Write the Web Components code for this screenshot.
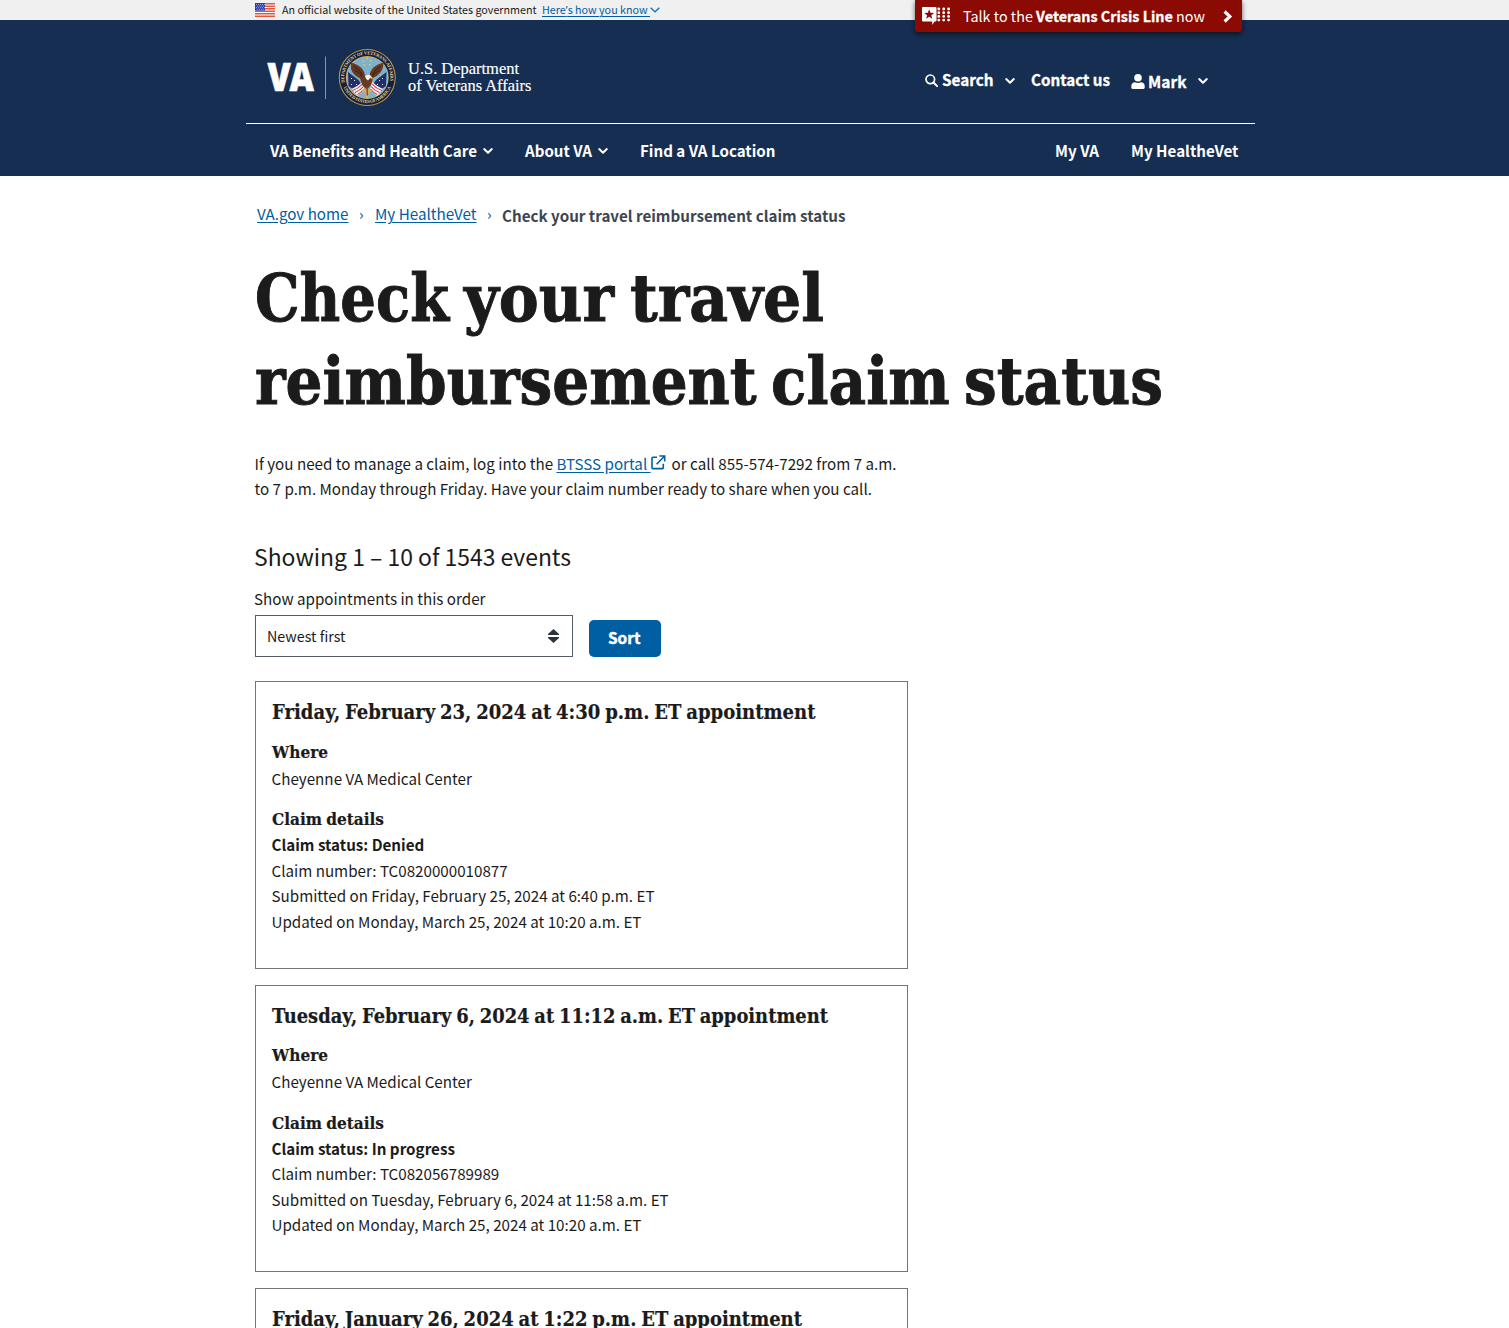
<!DOCTYPE html>
<html lang="en">
<head>
<meta charset="utf-8">
<title>Check your travel reimbursement claim status</title>
<style>
html,body{margin:0;padding:0}
body{background:#fff;color:#1b1b1b;font-family:"Noto Sans CJK SC","Source Sans Pro",sans-serif;font-size:15.18px;line-height:25.45px;height:1328px;overflow:hidden}
</style>
</head>
<body>
<va-page></va-page>
<script>
const SLAB = '"DejaVu Serif","DejaVu Serif Condensed",serif';

/* Single line of text set to a given measure. */
class FitText extends HTMLElement {
  connectedCallback() {
    if (!this.shadowRoot) {
      this.attachShadow({mode:'open'}).innerHTML = `
        <style>:host{display:inline-block;white-space:nowrap;vertical-align:baseline;text-decoration:inherit}
        span{display:inline-block;transform-origin:0 50%;text-decoration:inherit}</style><span><slot></slot></span>`;
    }
    const target = parseFloat(this.getAttribute('measure'));
    const span = this.shadowRoot.querySelector('span');
    span.style.transform = 'none';
    const natural = span.getBoundingClientRect().width;
    if (target && natural) {
      this.style.width = target + 'px';
      span.style.transform = `scaleX(${target / natural})`;
    }
  }
}
customElements.define('fit-text', FitText);

const ICONS = {
  chevron: ['0 0 10 6', '<path d="M1.2 1.1 5 4.700 8.800 1.100" fill="none" stroke="currentColor" stroke-width="2.100" stroke-linecap="round" stroke-linejoin="round"/>'],
  thin: ['0 0 10 6', '<path d="M.7 .8 5 4.9 9.3 .8" fill="none" stroke="currentColor" stroke-width="1.4"/>'],
  right: ['0 0 9 13', '<path d="M1.6 1.5 6.9 6.5 1.6 11.5" fill="none" stroke="currentColor" stroke-width="3.100"/>'],
  search: ['0 0 13 13', '<circle cx="5.3" cy="5.3" r="4.3" fill="none" stroke="currentColor" stroke-width="1.7"/><path d="m8.5 8.5 3.6 3.6" stroke="currentColor" stroke-width="2" stroke-linecap="round"/>'],
  user: ['0 0 14 15', '<circle cx="7" cy="3.8" r="3.8" fill="currentColor"/><path d="M.3 13.6V12c0-2.2 1.6-3.7 3.8-3.7.7.4 1.800.6 2.900.6s2.200-.2 2.900-.6c2.200 0 3.800 1.500 3.800 3.700v1.600c0 .8-.5 1.300-1.300 1.300H1.600c-.8 0-1.300-.5-1.300-1.300z" fill="currentColor"/>'],
  external: ['0 0 15 15', '<path d="M6 2.300H1.900a.9.900 0 0 0-.9.900v9.500c0 .5.4.9.900.9h9.500c.5 0 .9-.4.900-.9V8.800M8.300 1h5.400v5.400M13.200 1.500 5.600 9.200" fill="none" stroke="currentColor" stroke-width="1.6"/>'],
  sort: ['0 0 11 14', '<path d="M5.500 0 11 5.100V6H0V5.100zM5.500 14 11 8.900V8H0v.9z" fill="#2b333d"/>'],
  flag: ['0 0 20 14', '<path fill="#fff" d="M0 0h20v14H0z"/><path d="M0 .7h20M0 3.200h20M0 5.700h20M0 8.200h20M0 10.700h20M0 13.200h20" stroke="#e2563f" stroke-width="1.400"/><path fill="#2c3fb0" d="M0 0h10v7.600H0z"/><path d="M1 1.500h9M1.900 3.100h8M1 4.700h9M1.900 6.300h8" stroke="#c3cbf5" stroke-width=".8" stroke-dasharray=".9 1.100"/>'],
  crisis: ['0 0 29 18', '<path fill="#fff" d="M1 0h12.500q1 0 1 1v12.500q0 1-1 1H12.500L10.200 18V14.500H1q-1 0-1-1V1Q0 0 1 0z"/><path fill="#8b0a03" d="m7.200 2.300 1.300 3.400 3.600.2-2.800 2.300 1 3.500-3.100-2-3.100 2 1-3.500-2.800-2.300 3.600-.2z"/><path d="M16.800 2h10M16.800 5.800h10M16.800 9.400h10M16.800 13.100h10" stroke="#fff" stroke-width="2.900" stroke-linecap="round" stroke-dasharray="0 4.900"/>']
};
class VaIcon extends HTMLElement {
  connectedCallback() {
    const [box, art] = ICONS[this.getAttribute('name')];
    const [, , w, h] = box.split(' ');
    if (!this.shadowRoot) this.attachShadow({mode:'open'});
    this.shadowRoot.innerHTML = `<style>:host{display:inline-block;flex:none;line-height:0}svg{display:block;overflow:visible}</style>
      <svg width="${w}" height="${h}" viewBox="${box}" aria-hidden="true">${art}</svg>`;
  }
}
customElements.define('va-icon', VaIcon);

class GovBanner extends HTMLElement {
  connectedCallback() {
    this.attachShadow({mode:'open'}).innerHTML = `
    <style>
      :host{display:block;background:#f0f0f0;height:20px}
      .in{width:1000px;height:20px;margin:0 auto;display:flex;align-items:center;font-size:10.75px;line-height:20px}
      a{color:#005ea2;text-decoration:underline;text-underline-offset:1.500px;margin-left:5.500px}
      .txt{margin-left:7px}
      .c{color:#0071bc}
      i{font-style:normal;font-family:"Noto Sans",sans-serif}
    </style>
    <div class="in"><va-icon name="flag"></va-icon><span class="txt"><fit-text measure="254.500">An official website of the United States government</fit-text></span>
      <a><fit-text measure="108">Here<i>’</i>s how you know&nbsp;</fit-text></a><va-icon class="c" name="thin"></va-icon></div>`;
  }
}
customElements.define('gov-banner', GovBanner);

class CrisisLine extends HTMLElement {
  connectedCallback() {
    this.attachShadow({mode:'open'}).innerHTML = `
    <style>
      :host{display:flex;align-items:center;box-sizing:border-box;width:327px;height:32px;padding:0 10px 0 7px;background:#8b0a03;color:#fff;border-radius:0 0 3px 3px;box-shadow:0 2px 5px rgba(0,0,0,.6);font-size:14.500px;font-weight:400;line-height:32px}
      .t{margin-left:12px;flex:1}
      b{font-weight:700;-webkit-text-stroke:.3px #fff}
    </style>
    <va-icon name="crisis"></va-icon><span class="t"><fit-text measure="242">Talk to the <b>Veterans Crisis Line</b> now</fit-text></span><va-icon name="right"></va-icon>`;
  }
}
customElements.define('crisis-line', CrisisLine);

class VaLogo extends HTMLElement {
  connectedCallback() {
    const stars = [[28.500,7.500],[24.800,10],[32.200,10],[25.800,14],[31.200,14]].map(([x,y])=>`<circle cx="${x}" cy="${y+2}" r=".9" fill="#e9c63f"/>`).join('');
    this.attachShadow({mode:'open'}).innerHTML = `
    <style>:host{display:block}svg{display:block;overflow:visible}</style>
    <svg width="266" height="58" viewBox="0 0 266 58">
      <text transform="translate(1.500 41.800) scale(.85 1)" fill="#fff" stroke="#fff" stroke-width=".6" font-family="Open Sans" font-weight="800" font-size="39.500" x="0 25.800" y="0">VA</text>
      <path d="M59.500 7.500V50" stroke="#8b97a8" stroke-width="1"/>
      <g transform="translate(72.500 0)">
        <circle cx="28.750" cy="28.500" r="28.500" fill="#c79a45"/>
        <circle cx="28.750" cy="28.500" r="27.500" fill="#14203f"/>
        <circle cx="28.750" cy="28.500" r="21.400" fill="#d8b362"/>
        <circle cx="28.750" cy="28.500" r="20.700" fill="#7db2cf"/>
        <path id="top" d="M6.200 33.500A23.100 23.100 0 1 1 51.300 33.500" fill="none"/>
        <path id="bot" d="M3.800 34.500A25.700 25.700 0 0 0 53.700 34.500" fill="none"/>
        <g fill="#e6cf8d" font-family="Liberation Serif" font-weight="700" font-size="4.600">
          <text><textPath href="#top" textLength="81">DEPARTMENT OF VETERANS AFFAIRS</textPath></text>
          <text><textPath href="#bot" startOffset="4" textLength="60">UNITED STATES OF AMERICA</textPath></text>
        </g>
        ${stars}
        <path d="M9.500 23 20 31 24 37 17 42 10 37zM48 23 37.500 31 33.500 37 40.500 42 47.500 37z" fill="#232f68"/>
        <path d="M13 29v1m3 1v1m-3 3v1m5-1v1M44 29v1m-3 1v1m3 3v1m-5-1v1" stroke="#dfe5f5" stroke-width="1"/>
        <path d="M13 40q5-2 11-7l2 8-7 6zM44.500 40q-5-2-11-7l-2 8 7 6z" fill="#f3eeee"/>
        <path d="M14 41.500q6-2 10-6.500M16.500 43.500q5-2 8.500-6M19 45.500q4-2 6.500-5.500M43.500 41.500q-6-2-10-6.500M41 43.500q-5-2-8.500-6M38.500 45.500q-4-2-6.500-5.500" fill="none" stroke="#c23743" stroke-width="1.100"/>
        <path d="M12.500 13.500Q19 15 23 19q3 3 3.500 8l2.200 2 2.300-2q.5-5 3.500-8 4-4 10.500-5.500 0 6-3 10-3 3.500-7.500 5.500l-2 7-4 4.500-4.500-4-2.500-7q-4.500-2-7-5.500-2.500-4-2-5z" fill="#6a3a20"/>
        <path d="M15 17q6 3 9 9M16 21q5 2 8 7M42.500 17q-6 3-9 9M41.500 21q-5 2-8 7" fill="none" stroke="#3a1c12" stroke-width=".9"/>
        <path d="M26.500 27.500q3-3 5.500-1l2.500 3-3-.5-2 2.500q-2-1-3-4z" fill="#f7f2e5"/>
        <path d="m31.500 27.500 3.200 2.200-2.700-.1z" fill="#e8b92e"/>
        <path d="m23 42 3-3 1 5zM34 42l-3-3-1 5zM26.500 41h4l-1 8h-2z" fill="#d9b04c"/>
        <path d="M28 38.500h1.500v8H28z" fill="#c23743"/>
      </g>
      <g fill="#fff" font-family="Liberation Serif" font-size="17" font-weight="400" stroke="#fff" stroke-width=".15">
        <text x="142" y="25.300" textLength="111" lengthAdjust="spacingAndGlyphs">U.S. Department</text>
        <text x="142" y="42" textLength="123.500" lengthAdjust="spacingAndGlyphs">of Veterans Affairs</text>
      </g>
    </svg>`;
  }
}
customElements.define('va-logo', VaLogo);

class VaHeader extends HTMLElement {
  connectedCallback() {
    this.attachShadow({mode:'open'}).innerHTML = `
    <style>
      :host{display:block;background:#162e51;color:#fff;height:156px;position:relative;font-weight:700}
      crisis-line{position:absolute;left:915px;top:-20px}
      .in{width:1009px;margin:0 auto 0 246px}
      .top{height:103px;box-sizing:border-box;display:flex;padding:0 47px 0 20px}
      va-logo{margin-top:29px}
      .menu{margin-left:auto;height:26px;margin-top:47px;display:flex;align-items:center;-webkit-text-stroke:.3px #fff}
      .menu .d{margin-top:3px}
      .contact{margin:0 21px 0 16px}
      nav{border-top:1px solid #fff;height:53px;display:flex;align-items:center;padding:1px 17px 0 24px;box-sizing:border-box}
      nav va-icon{margin:0 32px 0 6px}
      .push{margin-left:auto;margin-right:32px}
    </style>
    <crisis-line></crisis-line>
    <div class="in">
      <div class="top"><va-logo></va-logo>
        <div class="menu"><va-icon name="search"></va-icon><fit-text measure="51.500" style="margin-left:4px">Search</fit-text><va-icon name="chevron" style="margin:2px 0 0 11.500px"></va-icon>
          <fit-text class="contact" measure="79">Contact us</fit-text>
          <va-icon name="user" style="margin:3px 3px 0 0"></va-icon><fit-text class="d" measure="38.500">Mark</fit-text><va-icon name="chevron" style="margin:2px 0 0 11.500px"></va-icon></div>
      </div>
      <nav><fit-text measure="207">VA Benefits and Health Care</fit-text><va-icon name="chevron"></va-icon>
        <fit-text measure="67">About VA</fit-text><va-icon name="chevron"></va-icon>
        <fit-text measure="135.500">Find a VA Location</fit-text>
        <fit-text class="push" measure="44">My VA</fit-text><fit-text measure="107.500">My HealtheVet</fit-text></nav>
    </div>`;
  }
}
customElements.define('va-header', VaHeader);

class VaCrumbs extends HTMLElement {
  connectedCallback() {
    this.attachShadow({mode:'open'}).innerHTML = `
    <style>
      :host{display:flex;align-items:center;height:26px;padding-left:2px;color:#005ea2}
      a{text-decoration:underline;text-underline-offset:1.500px}
      i{font-style:normal;width:26.500px;text-align:center}
      b{color:#3d4551;margin:4px 0 0 -.5px}
    </style>
    <a><fit-text measure="91.500">VA.gov home</fit-text></a><i>›</i><a><fit-text measure="101.500">My HealtheVet</fit-text></a><i>›</i><b><fit-text measure="343.500">Check your travel reimbursement claim status</fit-text></b>`;
  }
}
customElements.define('va-crumbs', VaCrumbs);

class SortForm extends HTMLElement {
  connectedCallback() {
    this.attachShadow({mode:'open'}).innerHTML = `
    <style>
      :host{display:block}
      .label{margin-left:-.5px}
      .row{display:flex;align-items:flex-end;gap:16px;margin-top:4px}
      .sel{box-sizing:border-box;width:318px;height:42px;border:1px solid #565c65;display:flex;align-items:center;justify-content:space-between;padding:0 12.500px 2px 11.500px;font-size:14.300px}
      .sel va-icon{margin-top:2px}
      button{all:unset;box-sizing:border-box;width:72px;height:37px;padding-bottom:2px;border-radius:5px;background:#005ea2;color:#fff;font-weight:700;display:flex;align-items:center;justify-content:center;-webkit-text-stroke:.4px #fff}
    </style>
    <div class="label"><fit-text measure="231.500">Show appointments in this order</fit-text></div>
    <div class="row"><div class="sel"><fit-text measure="78.500">Newest first</fit-text><va-icon name="sort"></va-icon></div><button><fit-text measure="32.500">Sort</fit-text></button></div>`;
  }
}
customElements.define('sort-form', SortForm);

class ClaimCard extends HTMLElement {
  connectedCallback() {
    const a = n => this.getAttribute(n);
    this.attachShadow({mode:'open'}).innerHTML = `
    <style>
      :host{display:block;box-sizing:border-box;width:653px;height:287.500px;border:1px solid #71767a;padding:16.300px 16px 0;margin-bottom:16px}
      h2,h3,p{margin:0}
      h2,h3{font-family:${SLAB};font-weight:700;word-spacing:-.08em;-webkit-text-stroke:.2px #1b1b1b}
      h2{font-size:19.500px;line-height:30px;margin-bottom:11.200px}
      h3{font-size:16.500px;line-height:26px}
      p + h3{margin:16.400px 0 -.9px}
    </style>
    <h2><fit-text measure="${a('measure')}">${a('when')} appointment</fit-text></h2>
    <h3><fit-text measure="56">Where</fit-text></h3>
    <p>Cheyenne VA Medical Center</p>
    <h3><fit-text measure="112">Claim details</fit-text></h3>
    <p><b>Claim status: ${a('status')}</b></p>
    <p>Claim number: ${a('number')}</p>
    <p>Submitted on ${a('submitted')}</p>
    <p>Updated on Monday, March 25, 2024 at 10:20 a.m. ET</p>`;
  }
}
customElements.define('claim-card', ClaimCard);

class VaPage extends HTMLElement {
  connectedCallback() {
    this.attachShadow({mode:'open'}).innerHTML = `
    <style>
      :host{display:block}
      main{width:1000px;margin:0 auto;padding-top:25px}
      h1{font:700 66px/82.700px ${SLAB};margin:30px 0 0;-webkit-text-stroke:1px #1b1b1b;word-spacing:-.1em}
      .ln{display:flex;gap:15.500px}
      .intro{margin:28.600px 0 0;white-space:nowrap}
      .intro a{color:#005ea2;text-decoration:underline;text-underline-offset:1.500px}
      .intro va-icon{color:#005ea2;margin:0 6px 0 0;vertical-align:0}
      .count{font-size:22.800px;line-height:34px;margin:37.600px 0 0 -.5px}
      sort-form{margin-top:12.400px}
      .list{margin-top:23.700px}
    </style>
    <gov-banner></gov-banner>
    <va-header></va-header>
    <main>
      <va-crumbs></va-crumbs>
      <h1><div class="ln"><fit-text measure="194">Check</fit-text> <fit-text measure="150">your</fit-text> <fit-text measure="194">travel</fit-text></div><fit-text measure="908">reimbursement claim status</fit-text></h1>
      <p class="intro">If you need to manage a claim, log into the <a>BTSSS portal&nbsp;</a><va-icon name="external"></va-icon>or call 855-574-7292 from 7 a.m.<br>to 7 p.m. Monday through Friday. Have your claim number ready to share when you call.</p>
      <p class="count"><fit-text measure="317">Showing 1 – 10 of 1543 events</fit-text></p>
      <sort-form></sort-form>
      <div class="list">
        <claim-card measure="543.500" when="Friday, February 23, 2024 at 4:30 p.m. ET" status="Denied" number="TC0820000010877" submitted="Friday, February 25, 2024 at 6:40 p.m. ET"></claim-card>
        <claim-card measure="556" when="Tuesday, February 6, 2024 at 11:12 a.m. ET" status="In progress" number="TC082056789989" submitted="Tuesday, February 6, 2024 at 11:58 a.m. ET"></claim-card>
        <claim-card measure="530" when="Friday, January 26, 2024 at 1:22 p.m. ET" status="In progress" number="TC082056789989" submitted="Friday, January 26, 2024 at 1:58 p.m. ET"></claim-card>
      </div>
    </main>`;
  }
}
customElements.define('va-page', VaPage);
</script>
</body>
</html>
